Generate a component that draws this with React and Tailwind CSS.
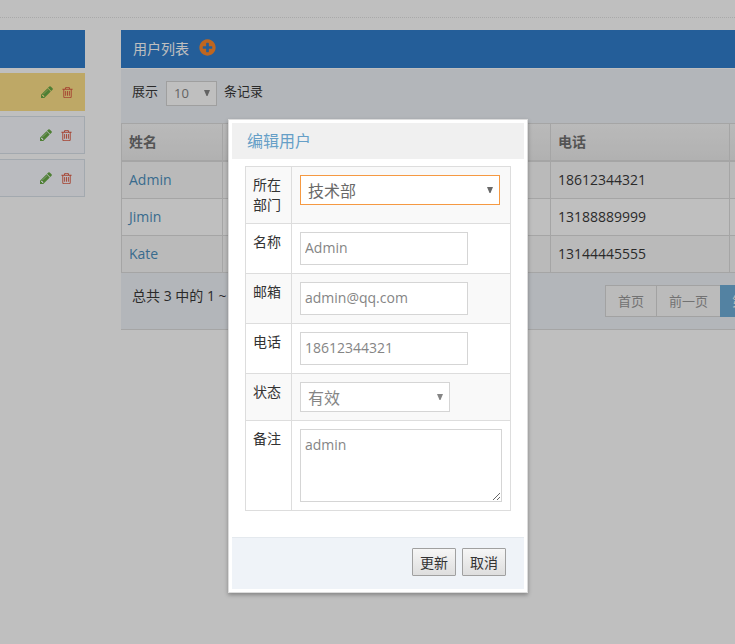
import React, { useState } from 'react';

const users = [
  { id: 1, name: 'Admin', phone: '18612344321' },
  { id: 2, name: 'Jimin', phone: '13188889999' },
  { id: 3, name: 'Kate', phone: '13144445555' },
];

const Pencil = () => (
  <svg viewBox="0 0 1792 1792" className="size-[14px] fill-[#69aa46]">
    <path d="M491 1536l91-91-235-235-91 91v107h128v128h107zm523-928q0-22-22-22-10 0-17 7l-542 542q-7 7-7 17 0 22 22 22 10 0 17-7l542-542q7-7 7-17zm-54-192l416 416-832 832h-416v-416zm683 96q0 53-37 90l-166 166-416-416 166-165q36-38 90-38 53 0 91 38l235 234q37 39 37 91z" />
  </svg>
);

const Trash = () => (
  <svg viewBox="0 0 1792 1792" className="size-[13px] fill-[#dd5a43]">
    <path d="M704 736v576q0 14-9 23t-23 9h-64q-14 0-23-9t-9-23v-576q0-14 9-23t23-9h64q14 0 23 9t9 23zm256 0v576q0 14-9 23t-23 9h-64q-14 0-23-9t-9-23v-576q0-14 9-23t23-9h64q14 0 23 9t9 23zm256 0v576q0 14-9 23t-23 9h-64q-14 0-23-9t-9-23v-576q0-14 9-23t23-9h64q14 0 23 9t9 23zm128 724v-948h-896v948q0 22 7 40.500t14.500 27 10.500 8.500h832q3 0 10.500-8.500t14.500-27 7-40.500zm-672-1076h448l-48-117q-7-9-17-11h-317q-10 2-17 11zm928 32v64q0 14-9 23t-23 9h-96v948q0 83-47 143.500t-113 60.500h-832q-66 0-113-58.500t-47-141.500v-952h-96q-14 0-23-9t-9-23v-64q0-14 9-23t23-9h309l70-167q15-37 54-63t79-26h320q40 0 79 26t54 63l70 167h309q14 0 23 9t9 23z" />
  </svg>
);

const PlusCircle = () => (
  <svg viewBox="0 0 1792 1792" className="size-[19px] fill-[#ff892a]">
    <path d="M1344 960v-128q0-26-19-45t-45-19h-256v-256q0-26-19-45t-45-19h-128q-26 0-45 19t-19 45v256h-256q-26 0-45 19t-19 45v128q0 26 19 45t45 19h256v256q0 26 19 45t45 19h128q26 0 45-19t19-45v-256h256q26 0 45-19t19-45zm320-64q0 209-103 385.500t-279.500 279.500-385.500 103-385.500-103-279.500-279.500-103-385.500 103-385.500 279.500-279.500 385.500-103 385.500 103 279.500 279.500 103 385.500z" />
  </svg>
);

const Caret = () => (
  <svg viewBox="0 0 6 6" className="size-[6px] shrink-0 fill-current">
    <path d="M0 0h6L3.500 6h-1z" />
  </svg>
);

const DeptList = () => (
  <aside className="w-[85px] shrink-0">
    <div className="h-[38px] bg-[#307ecc]" />
    <div className="mt-[5px] space-y-[5px]">
      <div className="flex h-[38px] items-center justify-end gap-[7px] bg-[#fee188] pr-[11px]">
        <Pencil />
        <Trash />
      </div>
      {[2, 3].map((id) => (
        <div key={id} className="flex h-[38px] items-center justify-end gap-[7px] border border-l-0 border-[#dae2ea] bg-[#f8faff] pr-[11px]">
          <Pencil />
          <Trash />
        </div>
      ))}
    </div>
  </aside>
);

const UserTable = () => (
  <section className="w-[680px] shrink-0">
    <div className="flex h-[38px] items-center bg-[#307ecc] pl-[12px] text-white">
      <span className="-mt-[2px] text-[14px]">用户列表</span>
      <span className="-mt-[3px] ml-[9px]"><PlusCircle /></span>
    </div>

    <div className="mt-px flex h-[54px] items-start bg-[#eff3f8] pt-3 pl-[11px] text-[13px]">
      <span className="-mt-px leading-[22px]">展示</span>
      <span className="mr-[7px] ml-[8px] flex h-[25px] w-[51px] items-center justify-between border border-[#d5d5d5] bg-white pr-[6px] pl-[7px] text-[#858585]">
        10 <span className="-mt-[2px]"><Caret /></span>
      </span>
      <span className="-mt-px leading-[22px]">条记录</span>
    </div>

    <table className="w-[680px] table-fixed border-separate border-spacing-0 border-t border-l border-[#ddd] text-left text-[14px]">
      <colgroup>
        <col className="w-[101px]" />
        <col className="w-[328px]" />
        <col className="w-[179px]" />
        <col />
      </colgroup>
      <thead>
        <tr className="h-[38px] bg-linear-to-b from-[#f8f8f8] to-[#ececec] text-[#707070]">
          <th className="border-r border-b-2 border-[#ddd] px-[7px] pt-0 pb-[2px] font-bold">姓名</th>
          <th className="border-r border-b-2 border-[#ddd]" />
          <th className="border-r border-b-2 border-[#ddd] px-[7px] pt-0 pb-[2px] font-bold">电话</th>
          <th className="border-b-2 border-[#ddd]" />
        </tr>
      </thead>
      <tbody>
        {users.map((u) => (
          <tr key={u.id} className="h-[37px] odd:bg-[#f9f9f9]">
            <td className="border-r border-b border-[#ddd] px-[7px] pt-0 pb-[2px] text-[#4c8fbd]">{u.name}</td>
            <td className="border-r border-b border-[#ddd]" />
            <td className="border-r border-b border-[#ddd] px-[7px] pt-0 pb-[2px]">{u.phone}</td>
            <td className="border-b border-[#ddd]" />
          </tr>
        ))}
      </tbody>
    </table>

    <div className="flex h-[57px] items-start border-b border-[#ddd] bg-[#eff3f8] pt-3 text-[14px]">
      <span className="w-[484px] shrink-0 pl-[11px] leading-[22px]">总共 3 中的 1 ~</span>
      <div className="flex h-[32px] text-[13px] leading-[30px] text-[#999]">
        <span className="w-[52px] border border-[#d9d9d9] bg-[#fafafa] text-center">首页</span>
        <span className="w-[63px] border-y border-[#d9d9d9] bg-[#fafafa] text-center">前一页</span>
        <span className="w-[81px] border border-[#6faed9] bg-[#6faed9] pl-[11px] text-white">第 1 页</span>
      </div>
    </div>
  </section>
);

const Field = ({ label, children }) => (
  <div className="flex border-b border-[#ddd] odd:bg-[#f9f9f9]">
    <div className="w-[46px] shrink-0 border-r border-[#ddd] py-2 pl-[7px] text-[14px] leading-[20px] text-[#333]">
      <div className="w-[30px]">{label}</div>
    </div>
    <div className="flex flex-1 items-start p-2">{children}</div>
  </div>
);

const inputClass = 'h-[33px] w-[168px] border border-[#d5d5d5] bg-white px-1 pb-[2px] text-[14px] text-[#858585] outline-none';

const buttonClass = 'h-[28px] w-[44px] rounded-[1px] border border-[#a0a0a0] bg-linear-to-b from-[#f6f6f6] to-[#dedede] pt-px text-[14px] leading-[26px] text-[#333]';

const EditDialog = () => {
  const [form, setForm] = useState({ name: 'Admin', email: 'admin@qq.com', phone: '18612344321', remark: 'admin' });
  const update = (key) => (e) => setForm({ ...form, [key]: e.target.value });

  return (
    <div className="absolute top-[119px] left-[228px] h-[474px] w-[300px] border border-[#dcdcdc] bg-white p-[3px] shadow-[0_2px_4px_rgba(0,0,0,0.3)]">
      <h4 className="h-[36px] bg-[#f0f0f0] pl-[15px] text-[16px] leading-[37px] text-[#669fc7]">编辑用户</h4>

      <div className="mt-[7px] ml-[13px] w-[266px] border border-b-0 border-[#ddd]">
        <Field label="所在部门">
          <div className="flex h-[30px] w-[200px] items-center justify-between border border-[#f59942] bg-white pr-[6px] pl-[7px] text-[16px] text-[#696969]">
            <span className="pt-[2px]">技术部</span> <Caret />
          </div>
        </Field>
        <Field label="名称">
          <input className={inputClass} value={form.name} onChange={update('name')} />
        </Field>
        <Field label="邮箱">
          <input className={inputClass} value={form.email} onChange={update('email')} />
        </Field>
        <Field label="电话">
          <input className={inputClass} value={form.phone} onChange={update('phone')} />
        </Field>
        <Field label="状态">
          <div className="flex h-[30px] w-[150px] items-center justify-between border border-[#d5d5d5] bg-white pr-[6px] pl-[7px] text-[16px] text-[#858585]">
            <span className="pt-[2px]">有效</span> <Caret />
          </div>
        </Field>
        <Field label="备注">
          <textarea
            className="h-[73px] w-[202px] resize border border-[#d5d5d5] bg-white px-1 py-[5px] text-[14px] leading-[20px] text-[#858585] outline-none"
            value={form.remark}
            onChange={update('remark')}
          />
        </Field>
      </div>

      <div className="mt-[26px] flex h-[52px] justify-end gap-[6px] border-t border-[#e4e9ee] bg-[#eff3f8] pt-[10px] pr-[18px]">
        <button className={buttonClass}>更新</button>
        <button className={buttonClass}>取消</button>
      </div>
    </div>
  );
};

const App = () => (
  <div className="relative h-[644px] w-[735px] overflow-hidden bg-white font-['Open_Sans','Noto_Sans_CJK_SC',sans-serif] text-[#393939]">
    <div className="h-[18px] border-b border-dotted border-[#e2e2e2]" />
    <main className="mt-3 flex gap-9">
      <DeptList />
      <UserTable />
    </main>
    <div className="absolute inset-0 bg-black/25" />
    <EditDialog />
  </div>
);

export default App;
